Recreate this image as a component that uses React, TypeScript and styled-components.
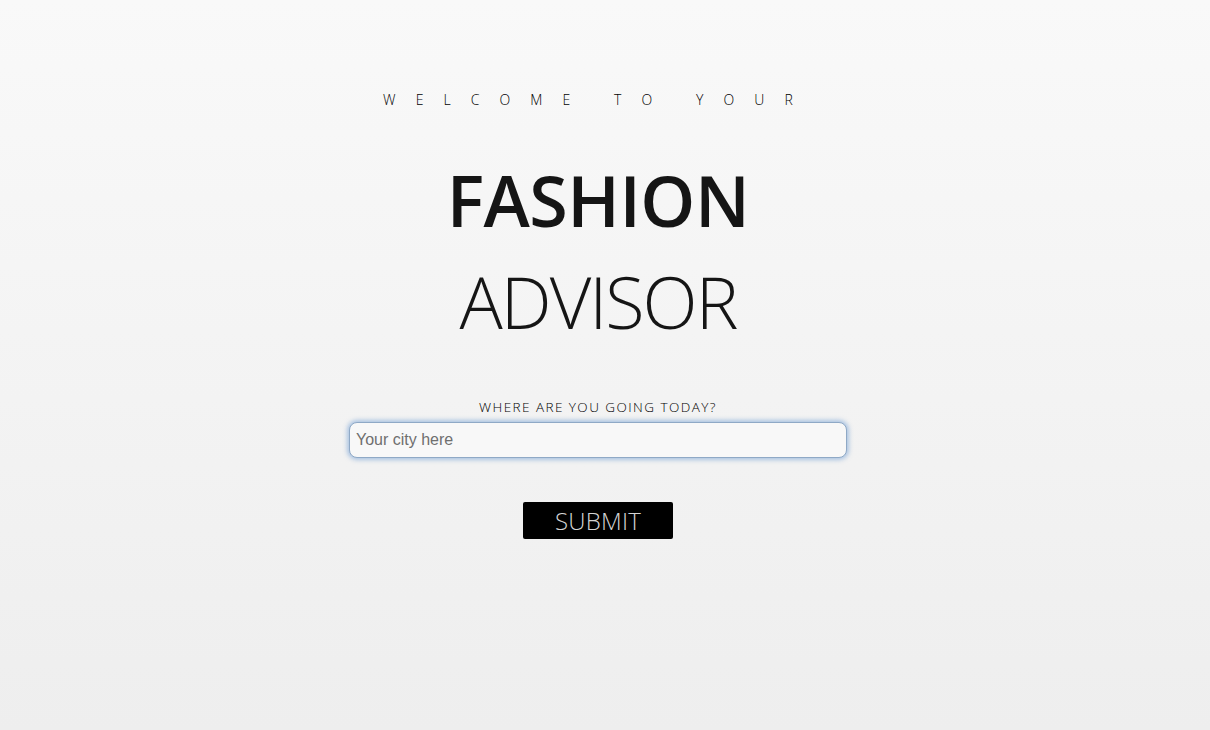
import React from "react";
import styled, { createGlobalStyle } from "styled-components";

const Global = createGlobalStyle`
  html, body { margin: 0; padding: 0; height: 100%; }
  body {
    background: linear-gradient(to bottom, #f9f9f9 0%, #eeeeee 100%);
    min-height: 730px;
    font-family: "Open Sans", sans-serif;
  }
`;

const Page = styled.main`
  display: flex;
  flex-direction: column;
  align-items: center;
  width: 1196px;
  padding-top: 89px;
  box-sizing: border-box;
`;

const Welcome = styled.div`
  font-family: "Open Sans", sans-serif;
  font-weight: 300;
  font-size: 14px;
  letter-spacing: 20.1px;
  color: #000;
  line-height: 22px;
`;

const Titles = styled.div`
  display: flex;
  flex-direction: column;
  align-items: center;
  margin-top: 38px;
`;

const Title = styled.h1<{ $light?: boolean }>`
  margin: 0;
  font-family: "Open Sans", sans-serif;
  font-weight: ${(p) => (p.$light ? 300 : 600)};
  font-size: ${(p) => (p.$light ? "72px" : "70px")};
  line-height: ${(p) => (p.$light ? "100px" : "102px")};
  letter-spacing: ${(p) => (p.$light ? "-2px" : "-0.5px")};
  color: #151515;
`;

const Form = styled.form`
  display: flex;
  flex-direction: column;
  align-items: center;
  margin-top: 47px;
`;

const Label = styled.label`
  font-family: "Open Sans", sans-serif;
  font-weight: 300;
  font-size: 13.5px;
  letter-spacing: 1.45px;
  color: #000;
  line-height: 18px;
`;

const Input = styled.input`
  margin-top: 6px;
  width: 498px;
  height: 36px;
  box-sizing: border-box;
  border: 1px solid #8fa9c6;
  border-radius: 8px;
  background: #f8f8f8;
  box-shadow: 0 0 4px 2px rgba(100, 150, 210, 0.5);
  padding: 0 6px;
  font-family: "Liberation Sans", Arial, sans-serif;
  font-size: 16px;
  color: #333;
  outline: none;
  &::placeholder { color: #6f6f6f; }
`;

const Submit = styled.button`
  margin-top: 44px;
  width: 150px;
  height: 37px;
  background: #000;
  color: #d4d4d4;
  border: none;
  border-radius: 2px;
  font-family: "Open Sans", sans-serif;
  font-weight: 300;
  font-size: 24px;
  letter-spacing: 0.2px;
  cursor: pointer;
  padding: 0;
`;

export default function App() {
  return (
    <>
      <Global />
      <Page>
        <Welcome>WELCOME TO YOUR</Welcome>
        <Titles>
          <Title>FASHION</Title>
          <Title $light>ADVISOR</Title>
        </Titles>
        <Form onSubmit={(e) => e.preventDefault()}>
          <Label htmlFor="city">WHERE ARE YOU GOING TODAY?</Label>
          <Input id="city" placeholder="Your city here" autoFocus />
          <Submit type="submit">SUBMIT</Submit>
        </Form>
      </Page>
    </>
  );
}
